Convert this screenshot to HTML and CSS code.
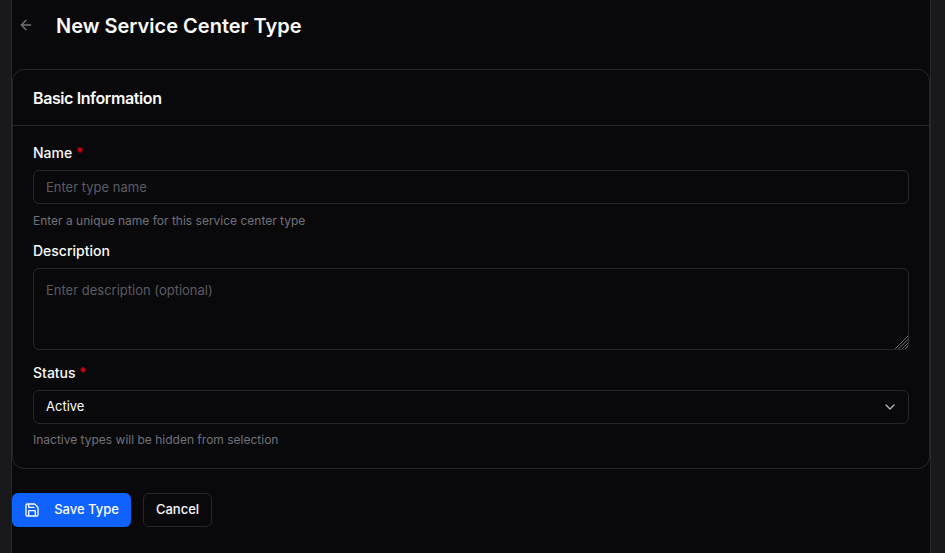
FILE: index.html
```html
<!DOCTYPE html>
<html lang="en">
<head>
<meta charset="utf-8">
<title>New Service Center Type</title>
<link rel="stylesheet" href="styles.css">
</head>
<body>
<main class="page">
  <header class="page-header">
    <svg class="back" viewBox="0 0 24 24"><path d="m12 19-7-7 7-7M19 12H5"/></svg>
    <h1>New Service Center Type</h1>
  </header>
  <form>
    <section class="card">
      <h2>Basic Information</h2>
      <div class="fields">
        <label class="label" for="name">Name <span class="required">*</span></label>
        <input id="name" class="control" type="text" placeholder="Enter type name">
        <p class="hint hint-name">Enter a unique name for this service center type</p>
        <label class="label" for="description">Description</label>
        <div class="textarea-wrap">
          <textarea id="description" class="control" placeholder="Enter description (optional)"></textarea>
          <svg class="grip" viewBox="0 0 14 14"><path d="M0.5 13.5 13 1M4 13.5 13 4.5M7.5 13.5 13 8M10.5 13.5 13 11"/></svg>
        </div>
        <label class="label">Status <span class="required">*</span></label>
        <div class="control select"><span>Active</span><svg class="chevron" viewBox="0 0 24 24"><path d="m6 9 6 6 6-6"/></svg></div>
        <p class="hint hint-status">Inactive types will be hidden from selection</p>
      </div>
    </section>
    <div class="actions">
      <button class="btn primary" type="button"><svg viewBox="0 0 24 24"><path d="M15.2 3a2 2 0 0 1 1.4.6l3.8 3.8a2 2 0 0 1 .6 1.4V19a2 2 0 0 1-2 2H5a2 2 0 0 1-2-2V5a2 2 0 0 1 2-2zM17 21v-7a1 1 0 0 0-1-1H8a1 1 0 0 0-1 1v7M7 3v4a1 1 0 0 0 1 1h7"/></svg><span>Save Type</span></button>
      <button class="btn secondary" type="button"><span>Cancel</span></button>
    </div>
  </form>
</main>
</body>
</html>
```

FILE: styles.css
```css
* { box-sizing: border-box; }
body {
  margin: 0;
  height: 553px;
  overflow: hidden;
  background: #19191b;
  color: #fafafa;
  font-family: Inter, sans-serif;
}
svg { fill: none; stroke: currentColor; stroke-width: 2; stroke-linecap: round; stroke-linejoin: round; }
.page {
  width: 920px;
  height: 553px;
  margin-left: 11px;
  background: #09090b;
  border: solid #27272a;
  border-width: 0 1px;
}
.page-header { display: flex; align-items: center; height: 69px; padding: 0 0 17px 6px; }
.back { width: 16px; height: 16px; color: #71717a; margin-top: -2px; }
h1 { margin: 0 0 0 22px; font-size: 20px; line-height: 28px; font-weight: 600; }
.card { height: 400px; border: 1px solid #27272a; border-radius: 12px; }
h2 {
  margin: 0;
  height: 56px;
  padding-left: 20px;
  border-bottom: 1px solid #27272a;
  font-size: 16px;
  line-height: 57px;
  font-weight: 600;
  letter-spacing: -0.4px;
}
.fields { display: flex; flex-direction: column; padding: 17px 20px 0; }
.label { font-size: 14px; line-height: 20px; font-weight: 500; margin-bottom: 7px; }
.required { color: #e7000b; font-weight: 500; }
.control {
  display: block;
  width: 100%;
  height: 34px;
  margin: 0;
  padding: 0 12px;
  border: 1px solid #27272a;
  border-radius: 6px;
  background: transparent;
  color: #fafafa;
  font: 400 13px/20px Inter, sans-serif;
  outline: none;
}
.control::placeholder { color: #5b5b63; opacity: 1; }
.hint { margin: 0; font-size: 12px; line-height: 16px; color: #71717a; }
.hint-name { margin: 9px 0 12px; }
.hint-status { margin-top: 8px; }
.textarea-wrap { position: relative; height: 82px; margin-bottom: 13px; }
textarea.control { height: 82px; padding: 11px 12px; resize: none; }
.grip { position: absolute; right: 0; bottom: 1px; width: 14px; height: 14px; color: #85858a; stroke-width: 0.8; }
.select { display: flex; align-items: center; justify-content: space-between; }
.select span { margin-top: -2px; }
.chevron { width: 16px; height: 16px; margin-right: -2px; color: #b4b4ba; }
.actions { display: flex; gap: 12px; margin-top: 24px; }
.btn {
  display: flex;
  align-items: center;
  justify-content: center;
  height: 34px;
  padding: 0;
  border: 0;
  border-radius: 6px;
  font: 500 13px/20px Inter, sans-serif;
  color: #fafafa;
}
.btn span { margin-top: -2px; }
.primary { width: 119px; gap: 14px; background: #0f62fe; }
.primary svg { width: 16px; height: 16px; }
.secondary { width: 69px; border: 1px solid #27272a; background: transparent; }
```
